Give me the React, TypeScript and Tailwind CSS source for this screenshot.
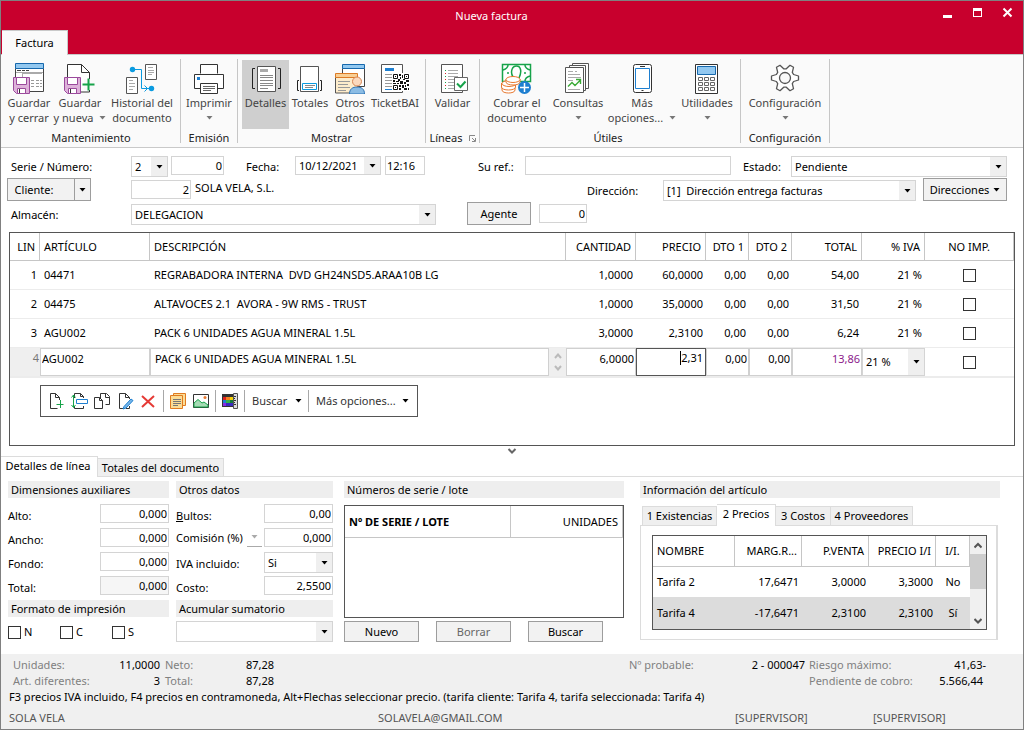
import { useId, type ReactNode } from "react";

function Caret({ className = "text-black" }: { className?: string }) {
  return (
    <svg width="7" height="4" viewBox="0 0 7 4" className={className} aria-hidden="true">
      <path d="M0.5 0h6L3.5 3.6z" fill="currentColor" />
    </svg>
  );
}

function Select({ label, id, options, className = "", height = "h-5" }: { label?: string; id?: string; options: string[]; className?: string; height?: string }) {
  return (
    <div className={`relative ${height} ${className}`}>
      <select id={id} aria-label={label} className="h-full w-full appearance-none border border-[#d4d4d4] bg-white pr-5 pl-[3px] outline-none">
        {options.map((o) => (
          <option key={o}>{o}</option>
        ))}
      </select>
      <span className="pointer-events-none absolute inset-y-px right-px flex w-4 items-center justify-center bg-[#efefef]">
        <Caret />
      </span>
    </div>
  );
}

function Field({ id, label, value, className = "" }: { id?: string; label?: string; value: string; className?: string }) {
  return (
    <input id={id} aria-label={label} defaultValue={value} className={`h-[19px] border border-[#d4d4d4] bg-white px-px outline-none ${className}`} />
  );
}

function PushButton({ children, className = "" }: { children: ReactNode; className?: string }) {
  return (
    <button type="button" className={`flex items-center justify-center border border-[#9d9d9d] bg-[#f2f2f2] ${className}`}>
      {children}
    </button>
  );
}

function Check({ label }: { label: string }) {
  return <input type="checkbox" aria-label={label} className="block size-[13px] appearance-none border border-[#333] bg-white checked:bg-[#333]" />;
}

/* ---------- Ribbon icons ---------- */

function Icon({ children }: { children: ReactNode }) {
  return (
    <svg width="32" height="32" viewBox="0 0 32 32" fill="none" aria-hidden="true" className="shrink-0">
      {children}
    </svg>
  );
}

function Floppy() {
  return (
    <g>
      <path d="M0.5 15.5h16v16H3.5l-3-3z" fill="#deb2da" stroke="#9b4a9c" />
      <path d="M3.5 15.5h10v7h-10z" fill="#fff" stroke="#9b4a9c" />
      <path d="M4.500 31.500v-5h8v5z" fill="#fff" stroke="#9b4a9c" />
      <path d="M6.500 27v4" stroke="#333" />
    </g>
  );
}

const saveClose = (
  <Icon>
    <path d="M2.500 6.500h28v23h-28z" fill="#fff" stroke="#444" />
    <path d="M2.500 1.500h28v5h-28z" fill="#92c8f0" stroke="#1668ad" />
    <path d="M4 8.500h4M9 8.500h3M13 8.500h3" stroke="#444" />
    <path d="M9 11.500h20M9.500 11v4M3 10.500h27" stroke="#aaa" />
    <path d="M18 18.500h3M23 18.500h6M18 21.500h3M23 21.500h6M18 24.500h3M23 24.500h6M9 15v3" stroke="#999" strokeDasharray="3 1" />
    <Floppy />
  </Icon>
);

const saveNew = (
  <Icon>
    <path d="M3.500 30V2.500h14l8 8V30z" fill="#fff" stroke="#333" />
    <path d="M17.500 2.500v8h8" stroke="#333" />
    <path d="M20 17h10v11H20z" fill="#fafafa" />
    <Floppy />
    <path d="M24.500 16.500v12M18.500 22.500h12" stroke="#17a34a" strokeWidth="2" />
  </Icon>
);

const history = (
  <Icon>
    <path d="M19.500 2.500h11v15h-11zM0.500 15.500h11v16h-11z" fill="#fff" stroke="#555" />
    <path d="M22 5.500h5M22 8.500h6M22 10.500h6M22 12.500h4M3 18.500h4M3 21.500h6M3 24.500h6M3 27.500h4" stroke="#aaa" />
    <circle cx="6.500" cy="7.500" r="2.700" fill="#0b9be0" />
    <circle cx="25.500" cy="26.500" r="2.700" fill="#0b9be0" />
    <path d="M7 7.500h8.500v19H24M18.500 23.500l3 3-3 3" stroke="#0b9be0" />
  </Icon>
);

const printer = (
  <Icon>
    <path d="M7.500 11.500v-9h17v9" fill="#fff" stroke="#333" />
    <path d="M1.500 12.500h29v14h-29z" fill="#fff" stroke="#333" />
    <path d="M4 15h3v3H4z" fill="#1e7fd0" />
    <path d="M7.500 21.500h17v10h-17z" fill="#fff" stroke="#333" />
    <path d="M10 24.500h12M10 26.500h12M10 28.500h8" stroke="#666" />
  </Icon>
);

const details = (
  <Icon>
    <path d="M7.500 4.500h18v25h-18z" fill="#fff" stroke="#555" />
    <path d="M10 7h8v3h-8z" fill="#aaa" />
    <path d="M10 13.500h13M10 15.500h13M10 18.500h13M10 21.500h13M10 23.500h13M10 26.500h8" stroke="#888" />
    <path d="M5 6.500H2.500v20H5M28 6.500h2.500v20H28" stroke="#222" />
  </Icon>
);

const totals = (
  <Icon>
    <path d="M6.500 4.500h18v25h-18z" fill="#fff" stroke="#555" />
    <path d="M8.500 21.500h14v6h-14z" fill="#fff" stroke="#0b9be0" />
    <path d="M11 23.500h10M11 25.500h8" stroke="#888" />
    <path d="M5 18.500H3.500v10H5M26 18.500h1.500v10H26" stroke="#222" />
  </Icon>
);

const otherData = (
  <Icon>
    <path d="M8.500 6.500h22v18h-22z" fill="#fff" stroke="#444" />
    <path d="M8.500 2.500h22v4h-22z" fill="#92c8f0" stroke="#1668ad" />
    <path d="M1.500 15.500h22v15.500h-22z" fill="#fdeccb" stroke="#555" />
    <path d="M1.500 11.500h22v4h-22z" fill="#f9cf94" stroke="#dc7b26" />
    <path d="M4 19.500h12M4 22.500h10M4 25.500h12M4 28.500h8" stroke="#999" />
    <path d="M15.500 32c0-5 3-7 7.500-7s7.500 2 7.500 7z" fill="#8bbce4" stroke="#2a72b4" />
    <circle cx="23" cy="19.500" r="4.500" fill="#fbd9bd" stroke="#d88755" />
  </Icon>
);

const ticket = (
  <Icon>
    <path d="M2.500 2.500h21v28h-21z" fill="#fff" stroke="#555" />
    <path d="M6 6h9v3H6z" fill="#1e7fd0" />
    <path d="M6 12.500h9M6 15.500h7M6 18.500h7M6 21.500h7M6 24.500h7" stroke="#999" />
    <path d="M6 27.500h7" stroke="#1e7fd0" />
    <path d="M13 11h18v18H13z" fill="#fff" />
    <path d="M14.500 12.500h4v4h-4zM25.500 12.500h4v4h-4zM14.500 23.500h4v4h-4z" stroke="#111" />
    <path d="M16 14h1v1h-1zM27 14h1v1h-1zM16 25h1v1h-1zM20 12h2v2h-2zM23 13h1v3h-1zM21 15h1v2h-1zM14 18h2v2h-2zM17 19h3v1h-3zM19 17h2v2h-2zM21 19h3v3h-3zM24 17h2v1h-2zM27 18h3v2h-3zM25 20h2v2h-2zM14 21h3v1h-3zM18 21h2v1h-2zM20 23h2v2h-2zM23 23h2v3h-2zM26 23h1v2h-1zM28 22h2v2h-2zM20 26h2v2h-2zM25 26h3v2h-3zM29 26h1v2h-1z" fill="#111" />
  </Icon>
);

const validate = (
  <Icon>
    <path d="M4.500 2.500h21v28h-21z" fill="#fff" stroke="#555" />
    <path d="M11 8.500h10M11 11.500h10M11 14.500h10M11 17.500h10M11 20.500h6M11 23.500h6M11 26.500h6" stroke="#aaa" />
    <path d="M8 8.500h1M8 14.500h1M8 20.500h1M8 26.500h1" stroke="#17a34a" />
    <path d="M8 11.500h1M8 17.500h1M8 23.500h1" stroke="#d22" />
    <path d="M17.500 15.500h13v13h-13z" fill="#fff" stroke="#666" />
    <path d="M20 21.500l3.500 3.500 5-5.500" stroke="#17a34a" strokeWidth="2" />
  </Icon>
);

const cash = (
  <Icon>
    <path d="M1.500 2.500h28v17h-28z" fill="#fff" stroke="#17a34a" strokeWidth="1.500" />
    <path d="M2 8c3-1 5-3 5-5M29 8c-3-1-5-3-5-5M29 14c-3 1-5 3-5 5M12 15c-3-5-1-11 3.500-11S21 10 18 16" stroke="#17a34a" strokeWidth="1.500" />
    <circle cx="7" cy="11" r="1" fill="#17a34a" />
    <circle cx="24" cy="11" r="1" fill="#17a34a" />
    <g fill="#fff" stroke="#e8782f">
      <path d="M1 25v3c0 4 13 4 13 0v-3" />
      <path d="M0.500 21v4c0 4 14 4 14 0v-4" />
      <ellipse cx="8" cy="21.500" rx="7" ry="3" />
      <path d="M5 17v3c0 4 14 4 14 0v-3" />
      <ellipse cx="12" cy="17.500" rx="7" ry="3" />
    </g>
    <circle cx="23.500" cy="25.500" r="6.500" fill="#1e7fd0" />
    <path d="M23.500 21v9M19 25.500h9" stroke="#fff" strokeWidth="1.500" />
  </Icon>
);

const queries = (
  <Icon>
    <path d="M10.500 1.500h16v25h-16z" fill="#fff" stroke="#555" />
    <path d="M7.500 3.500h16v25h-16z" fill="#fff" stroke="#555" />
    <path d="M3.500 5.500h18v25h-18z" fill="#fff" stroke="#555" />
    <path d="M6 9.500h5M13 9.500h2M6 12.500h12M6 15.500h13M6 18.500h5M6 27.500h12" stroke="#aaa" />
    <path d="M6 24.500l4-4 3 3 5-5M14 17.500h4.500V22" stroke="#3aaa35" strokeWidth="1.400" />
  </Icon>
);

const phone = (
  <Icon>
    <rect x="7.500" y="2.500" width="18" height="28" rx="2" fill="#fff" stroke="#333" />
    <path d="M9.500 6.500h14v20h-14z" fill="#fff" stroke="#1e7fd0" />
    <path d="M14 4.500h5M15.500 28.500h2" stroke="#333" />
  </Icon>
);

const calculator = (
  <Icon>
    <path d="M4.500 2.500h22v29h-22z" fill="#fff" stroke="#333" />
    <path d="M6.500 4.500h18v8h-18z" fill="#92c8f0" stroke="#1668ad" />
    <path d="M7.500 15.500h4v3h-4zM13.500 15.500h4v3h-4zM19.500 15.500h4v3h-4zM7.500 20.500h4v3h-4zM13.500 20.500h4v3h-4zM19.500 20.500h4v3h-4zM7.500 25.500h4v3h-4zM13.500 25.500h4v3h-4zM19.500 25.500h4v3h-4z" stroke="#666" />
  </Icon>
);

const gear = (
  <Icon>
    <path
      d="M24.600 12.500L29.500 14v4l-4.900 1.500-1.300 2.200 1.200 5L21 28.700l-3.700-3.500h-2.600L11 28.700l-3.500-2 1.200-5-1.300-2.200L2.500 18v-4l4.900-1.500 1.300-2.200-1.200-5 3.500-2 3.700 3.500h2.600L21 3.300l3.500 2-1.200 5z"
      fill="#fff"
      stroke="#555"
      strokeWidth="1.300"
      strokeLinejoin="round"
    />
    <circle cx="16" cy="16" r="5.500" fill="#fafafa" stroke="#555" strokeWidth="1.300" />
  </Icon>
);

/* ---------- Ribbon ---------- */

function Tool({ icon, lines, width, active, drop }: { icon: ReactNode; lines: string[]; width: string; active?: boolean; drop?: boolean }) {
  return (
    <button type="button" className={`flex h-[69px] flex-col items-center pt-0.5 leading-[15px] whitespace-nowrap text-[#444] ${width} ${active ? "bg-[#cfcfcf]" : ""}`}>
      {icon}
      <span className="pt-px">{lines[0]}</span>
      <span className="flex h-[15px] items-center gap-1.5">
        {lines[1]}
        {drop && <Caret className="text-[#777]" />}
      </span>
    </button>
  );
}

function Group({ label, children, className = "", corner }: { label: string; children: ReactNode; className?: string; corner?: boolean }) {
  return (
    <section className={`my-1 flex flex-col border-r border-[#c6c6c6] pt-px ${className}`}>
      <div className="flex">{children}</div>
      <div className="flex items-center justify-center gap-1.5 pt-1 leading-[10px] text-[#222]">
        {label}
        {corner && (
          <svg width="7" height="7" viewBox="0 0 7 7" fill="none" stroke="#888" aria-hidden="true">
            <path d="M0.500 6V0.500H6M3 3l3 3M6.500 3v3.500H3" />
          </svg>
        )}
      </div>
    </section>
  );
}

function Ribbon() {
  return (
    <div className="flex h-[94px] overflow-hidden border-y border-[#c9c9c9] bg-[#fafafa]">
      <Group label="Mantenimiento" className="pl-[3px] pr-[2px]">
        <Tool icon={saveClose} lines={["Guardar", "y cerrar"]} width="w-[50px]" />
        <Tool icon={saveNew} lines={["Guardar", "y nueva"]} width="w-[52px]" drop />
        <Tool icon={history} lines={["Historial del", "documento"]} width="w-[72px]" />
      </Group>
      <Group label="Emisión">
        <Tool icon={printer} lines={["Imprimir", ""]} width="w-[56px]" drop />
      </Group>
      <Group label="Mostrar" className="pl-[4px] pr-[4px]">
        <Tool icon={details} lines={["Detalles", ""]} width="w-[47px]" active />
        <Tool icon={totals} lines={["Totales", ""]} width="w-[42px]" />
        <Tool icon={otherData} lines={["Otros", "datos"]} width="w-[38px]" />
        <Tool icon={ticket} lines={["TicketBAI", ""]} width="w-[52px]" />
      </Group>
      <Group label="Líneas" corner>
        <Tool icon={validate} lines={["Validar", ""]} width="w-[53px]" />
      </Group>
      <Group label="Útiles" className="pl-[2px] pr-[6px]">
        <Tool icon={cash} lines={["Cobrar el", "documento"]} width="w-[70px]" />
        <Tool icon={queries} lines={["Consultas", ""]} width="w-[52px]" drop />
        <Tool icon={phone} lines={["Más", "opciones..."]} width="w-[76px]" drop />
        <Tool icon={calculator} lines={["Utilidades", ""]} width="w-[54px]" drop />
      </Group>
      <Group label="Configuración">
        <Tool icon={gear} lines={["Configuración", ""]} width="w-[88px]" drop />
      </Group>
    </div>
  );
}

/* ---------- Invoice header ---------- */

function InvoiceHeader() {
  return (
    <form className="flex flex-col pt-2 pr-4 pl-1.5">
      <div className="flex h-6 items-start">
        <label htmlFor="serie" className="w-[124px] pt-[3px] pl-1">Serie / Número:</label>
        <Select id="serie" options={["2"]} className="w-[37px]" height="h-[21px]" />
        <Field label="Número" value="0" className="ml-[3px] w-[53px] text-right" />
        <label htmlFor="fecha" className="w-[71px] pt-[3px] pl-[22px]">Fecha:</label>
        <Select id="fecha" options={["10/12/2021"]} className="w-[86px]" height="h-[19px]" />
        <Field label="Hora" value="12:16" className="ml-1 w-10" />
        <label htmlFor="ref" className="w-[100px] pt-[3px] pl-[53px]">Su ref.:</label>
        <Field id="ref" value="" className="min-w-0 flex-1" />
        <label htmlFor="estado" className="w-[60px] pt-[3px] pl-3">Estado:</label>
        <Select id="estado" options={["Pendiente"]} className="w-[216px]" height="h-[21px]" />
      </div>
      <div className="flex h-6 items-start">
        <div className="-mt-0.5 flex">
          <PushButton className="h-[23px] w-[68px] pr-3.5">Cliente:</PushButton>
          <button type="button" aria-label="Opciones de cliente" className="flex h-[23px] w-4 items-center justify-center border border-l-0 border-[#9d9d9d] bg-[#f2f2f2]">
            <Caret />
          </button>
        </div>
        <Field label="Cliente" value="2" className="ml-10 w-[60px] text-right" />
        <span className="flex-1 pl-1">SOLA VELA, S.L.</span>
        <label htmlFor="direccion" className="w-[76px] pt-[3px]">Dirección:</label>
        <Select id="direccion" options={["[1]\u00a0 Dirección entrega facturas"]} className="w-[253px]" height="h-[21px]" />
        <PushButton className="-mt-0.5 ml-[7px] h-[23px] w-[84px] gap-1">
          Direcciones <Caret />
        </PushButton>
      </div>
      <div className="flex h-7 items-start">
        <label htmlFor="almacen" className="w-[124px] pt-[3px] pl-1">Almacén:</label>
        <Select id="almacen" options={["DELEGACION"]} className="w-[305px]" height="h-[21px]" />
        <PushButton className="-mt-0.5 ml-[31px] h-[23px] w-16">Agente</PushButton>
        <Field label="Agente" value="0" className="ml-2 w-12 text-right" />
      </div>
    </form>
  );
}

/* ---------- Line grid ---------- */

type Line = { n: string; art: string; desc: string; cant: string; precio: string; total: string };

const lines: Line[] = [
  { n: "1", art: "04471", desc: "REGRABADORA INTERNA  DVD GH24NSD5.ARAA10B LG", cant: "1,0000", precio: "60,0000", total: "54,00" },
  { n: "2", art: "04475", desc: "ALTAVOCES 2.1  AVORA - 9W RMS - TRUST", cant: "1,0000", precio: "35,0000", total: "31,50" },
  { n: "3", art: "AGU002", desc: "PACK 6 UNIDADES AGUA MINERAL 1.5L", cant: "3,0000", precio: "2,3100", total: "6,24" },
];

function EditCell({ label, value, className = "" }: { label: string; value: string; className?: string }) {
  return <input aria-label={label} defaultValue={value} className={`block h-7 w-full min-w-0 border border-[#d0d0d0] bg-white px-px pb-2 outline-none ${className}`} />;
}

function SmallIcon({ label, children }: { label: string; children: ReactNode }) {
  return (
    <button type="button" aria-label={label} className="flex w-[23px] shrink-0 justify-center">
      <svg width="18" height="18" viewBox="0 0 18 18" fill="none" aria-hidden="true">
        {children}
      </svg>
    </button>
  );
}

const Divider = () => <span className="h-[22px] w-px bg-[#a8a8a8]" />;

function LineToolbar() {
  return (
    <div className="mt-[7px] ml-[30px] flex h-8 w-fit items-center border border-[#555] bg-white pr-2 pl-[3px] text-[#333]">
      <SmallIcon label="Nueva línea">
        <path d="M12.500 8V5.500l-4-4h-5v15h7M8.500 1.500v4h4" stroke="#333" />
        <path d="M13.500 8v8M9.500 12.500h7" stroke="#17a34a" />
      </SmallIcon>
      <SmallIcon label="Insertar línea">
        <path d="M4.500 6V1.500h6l3 3V6M4.500 14v2.500h9V14M10.500 1.500v3h3" stroke="#333" />
        <path d="M6.500 7.500h11v4h-11z" stroke="#1e7fd0" />
        <path d="M3.500 3v12M1.500 5.500l2-2.500 2 2.500M1.500 13l2 2.500 2-2.500" stroke="#17a34a" />
      </SmallIcon>
      <SmallIcon label="Duplicar línea">
        <path d="M7.500 6V1.500h6l3 3v8h-4M12.500 1.500v4h4" stroke="#333" />
        <path d="M1.500 5.500h5l3 3v8h-8zM6.500 5.500v3h3" fill="#fff" stroke="#333" />
      </SmallIcon>
      <SmallIcon label="Editar línea">
        <path d="M13.500 7V5.500l-4-4h-6v15h4M9.500 1.500v4h4M10 16.500h3.500V14" stroke="#333" />
        <path d="M8 14.500L15 7l2 1.500-7 7.500-3 1z" fill="#78b7ea" stroke="#1e7fd0" />
      </SmallIcon>
      <SmallIcon label="Eliminar línea">
        <path d="M3 4l12 11M15 4L3 15" stroke="#e53a35" strokeWidth="2" />
      </SmallIcon>
      <span className="w-1" />
      <Divider />
      <span className="w-0.5" />
      <SmallIcon label="Notas">
        <path d="M4.500 1.500h12v12h-12z" fill="#fbdc96" stroke="#e07b20" />
        <path d="M1.500 3.500h12v13h-12z" fill="#fbdc96" stroke="#e07b20" />
        <path d="M4 7.500h8M4 9.500h8M4 11.500h8M4 13.500h5" stroke="#777" />
      </SmallIcon>
      <SmallIcon label="Imagen">
        <path d="M1.500 2.500h15v13h-15z" fill="#fff" stroke="#333" />
        <path d="M2 11l4-3.500 4 3.500 2-1 4 3v2H2z" fill="#a5dbb4" stroke="#17a34a" />
        <circle cx="13" cy="5.500" r="1.500" fill="#e8782f" />
      </SmallIcon>
      <span className="w-[3px]" />
      <Divider />
      <span className="w-0.5" />
      <SmallIcon label="Tallas y colores">
        <path d="M1 2h12v13H1z" fill="#333" />
        <path d="M2 5h3v3H2z" fill="#e02020" />
        <path d="M5 5h4v3H5z" fill="#f58220" />
        <path d="M9 5h3v3H9z" fill="#f4d20b" />
        <path d="M2 8h3v3H2z" fill="#1e7fd0" />
        <path d="M5 8h4v3H5z" fill="#35b34a" />
        <path d="M9 8h3v3H9z" fill="#147a3a" />
        <path d="M2 11h3v3H2z" fill="#8a2be2" />
        <path d="M5 11h7v3H5z" fill="#3b2bc0" />
        <path d="M12.500 1.500h4v15h-4z" fill="#ddd" stroke="#555" />
        <path d="M13 4.500h2M13 6.500h1M13 8.500h2M13 10.500h1M13 12.500h2" stroke="#333" />
      </SmallIcon>
      <span className="w-[3px]" />
      <Divider />
      <button type="button" className="flex w-[63px] items-center gap-2 pl-[7px] whitespace-nowrap">
        Buscar <Caret />
      </button>
      <Divider />
      <button type="button" className="flex items-center gap-1.5 pl-[7px] whitespace-nowrap">
        Más opciones... <Caret />
      </button>
    </div>
  );
}

const headCell = "border-r border-b border-[#c6c6c6] px-1 font-normal";

function LineGrid() {
  return (
    <div className="mx-2 flex min-h-[214px] flex-1 flex-col border border-[#555]">
      <table className="w-full table-fixed border-separate border-spacing-0">
        <colgroup>
          <col className="w-[30px]" />
          <col className="w-[110px]" />
          <col />
          <col className="w-[70px]" />
          <col className="w-[70px]" />
          <col className="w-[43px]" />
          <col className="w-[43px]" />
          <col className="w-[70px]" />
          <col className="w-[63px]" />
          <col className="w-[89px]" />
        </colgroup>
        <thead>
          <tr className="h-7 whitespace-nowrap">
            <th className={`${headCell} text-right`}>LIN</th>
            <th className={`${headCell} text-left`}>ARTÍCULO</th>
            <th className={`${headCell} text-left`}>DESCRIPCIÓN</th>
            <th className={`${headCell} text-right`}>CANTIDAD</th>
            <th className={`${headCell} text-right`}>PRECIO</th>
            <th className={`${headCell} text-right`}>DTO 1</th>
            <th className={`${headCell} text-right`}>DTO 2</th>
            <th className={`${headCell} text-right`}>TOTAL</th>
            <th className={`${headCell} text-right`}>% IVA</th>
            <th className={`${headCell} text-center`}>NO IMP.</th>
          </tr>
        </thead>
        <tbody>
          {lines.map((l) => (
            <tr key={l.n} className="h-[29px] whitespace-pre *:border-b *:border-[#ececec] *:px-[3px]">
              <td className="text-right">{l.n}</td>
              <td className="pl-1!">{l.art}</td>
              <td className="pl-1!">{l.desc}</td>
              <td className="text-right">{l.cant}</td>
              <td className="text-right">{l.precio}</td>
              <td className="text-right">0,00</td>
              <td className="text-right">0,00</td>
              <td className="text-right">{l.total}</td>
              <td className="text-right">21 %</td>
              <td>
                <div className="flex justify-center">
                  <Check label={`No imprimir línea ${l.n}`} />
                </div>
              </td>
            </tr>
          ))}
          <tr className="*:border-b-2 *:border-[#ececec] *:p-0">
            <td className="h-[30px] bg-[#efefef] pr-px! pb-2! text-right text-[#777]">4</td>
            <td><EditCell label="Artículo" value="AGU002" /></td>
            <td>
              <div className="flex">
                <EditCell label="Descripción" value="PACK 6 UNIDADES AGUA MINERAL 1.5L" className="flex-1 pl-1!" />
                <div className="flex w-[17px] flex-col items-center justify-center gap-1.5 bg-[#efefef]">
                  <button type="button" aria-label="Subir">
                    <svg width="8" height="6" viewBox="0 0 8 6" fill="none" stroke="#bbb" strokeWidth="2"><path d="M1 5l3-3.500L7 5" /></svg>
                  </button>
                  <button type="button" aria-label="Bajar">
                    <svg width="8" height="6" viewBox="0 0 8 6" fill="none" stroke="#bbb" strokeWidth="2"><path d="M1 1l3 3.500L7 1" /></svg>
                  </button>
                </div>
              </div>
            </td>
            <td><EditCell label="Cantidad" value="6,0000" className="text-right" /></td>
            <td>
              <div className="flex h-7 justify-end border border-[#555] pr-0.5">
                <span className="mt-0.5 h-3.5 w-px bg-black" />
                <input aria-label="Precio" defaultValue="2,31" className="block w-[22px] pb-2 text-right outline-none" />
              </div>
            </td>
            <td><EditCell label="Descuento 1" value="0,00" className="text-right" /></td>
            <td><EditCell label="Descuento 2" value="0,00" className="text-right" /></td>
            <td><EditCell label="Total" value="13,86" className="text-right text-[#8b1a8b]" /></td>
            <td><Select label="IVA" options={["21 %"]} className="w-full" height="h-7" /></td>
            <td>
              <div className="flex justify-center">
                <Check label="No imprimir línea 4" />
              </div>
            </td>
          </tr>
        </tbody>
      </table>
      <LineToolbar />
    </div>
  );
}

/* ---------- Lower detail panels ---------- */

function PanelTitle({ children, className = "" }: { children: ReactNode; className?: string }) {
  return <h2 className={`h-[17px] bg-[#eeeeee] px-[3px] leading-[17px] whitespace-nowrap ${className}`}>{children}</h2>;
}

function Row({ label, value, width, readOnly }: { label: ReactNode; value: string; width: string; readOnly?: boolean }) {
  const id = useId();
  return (
    <div className="flex h-6 items-start justify-between">
      <label htmlFor={id} className="pt-1">{label}</label>
      <Field id={id} value={value} className={`text-right ${width} ${readOnly ? "bg-[#f6f6f6]!" : ""}`} />
    </div>
  );
}

function Dimensions() {
  return (
    <div className="w-[161px] shrink-0">
      <PanelTitle>Dimensiones auxiliares</PanelTitle>
      <div className="pt-1.5">
        <Row label="Alto:" value="0,000" width="w-[69px]" />
        <Row label="Ancho:" value="0,000" width="w-[69px]" />
        <Row label="Fondo:" value="0,000" width="w-[69px]" />
        <Row label="Total:" value="0,000" width="w-[69px]" readOnly />
      </div>
      <PanelTitle>Formato de impresión</PanelTitle>
      <div className="flex pt-[7px]">
        {["N", "C", "S"].map((f) => (
          <label key={f} className="flex w-[52px] items-center gap-[3px]">
            <Check label={f} />
            {f}
          </label>
        ))}
      </div>
    </div>
  );
}

function OtherData() {
  return (
    <div className="ml-[7px] w-[157px] shrink-0">
      <PanelTitle>Otros datos</PanelTitle>
      <div className="pt-1.5">
        <Row label={<><u>B</u>ultos:</>} value="0,00" width="w-[69px]" />
        <div className="flex h-6 items-start">
          <label htmlFor="comision" className="w-[71px] pt-0.5">Comisión (%)</label>
          <button type="button" aria-label="Tipo de comisión" className="flex h-[19px] w-[15px] items-center justify-center border-b border-[#aaa]">
            <Caret className="text-[#aaa]" />
          </button>
          <Field id="comision" value="0,000" className="ml-auto w-[69px] text-right" />
        </div>
        <div className="flex h-6 items-start justify-between">
          <label htmlFor="iva" className="pt-1">IVA incluido:</label>
          <Select id="iva" options={["Si"]} className="w-[69px]" height="h-[21px]" />
        </div>
        <Row label="Costo:" value="2,5500" width="w-[69px]" />
      </div>
      <PanelTitle>Acumular sumatorio</PanelTitle>
      <Select label="Acumular sumatorio" options={[""]} className="mt-1 w-[157px]" height="h-[21px]" />
    </div>
  );
}

function SerialNumbers() {
  return (
    <div className="ml-[11px] flex w-[280px] shrink-0 flex-col">
      <PanelTitle>Números de serie / lote</PanelTitle>
      <div className="mt-[7px] h-[113px] border border-[#555]">
        <table className="w-full table-fixed border-separate border-spacing-0">
          <thead>
            <tr className="h-8">
              <th className="w-[166px] border-r border-b border-[#c6c6c6] pl-1 text-left font-bold">Nº DE SERIE / LOTE</th>
              <th className="border-r border-b border-[#c6c6c6] pr-1 text-right font-normal">UNIDADES</th>
            </tr>
          </thead>
        </table>
      </div>
      <div className="mt-[3px] flex gap-[17px]">
        <PushButton className="h-[21px] w-[75px]">Nuevo</PushButton>
        <PushButton className="h-[21px] w-[75px] text-[#666]">Borrar</PushButton>
        <PushButton className="h-[21px] w-[75px]">Buscar</PushButton>
      </div>
    </div>
  );
}

const prices = [
  ["Tarifa 2", "17,6471", "3,0000", "3,3000", "No"],
  ["Tarifa 4", "-17,6471", "2,3100", "2,3100", "Sí"],
];

const sideTab = "border-t border-r border-[#dcdcdc] bg-[#efefef] h-[19px] whitespace-nowrap";
const priceHead = "border-r border-b border-[#c6c6c6] px-1 font-normal";

function ArticleInfo() {
  return (
    <div className="ml-4 max-w-[360px] min-w-0 flex-1">
      <PanelTitle>Información del artículo</PanelTitle>
      <div role="tablist" className="mt-[7px] flex h-5 items-end pl-0.5">
        <button type="button" role="tab" className={`${sideTab} w-[75px] border-l`}>1 Existencias</button>
        <button type="button" role="tab" aria-selected="true" className="z-10 -mb-px h-[22px] w-[59px] border-t border-r border-[#dcdcdc] bg-white pb-1 whitespace-nowrap">2 Precios</button>
        <button type="button" role="tab" className={`${sideTab} w-[55px]`}>3 Costos</button>
        <button type="button" role="tab" className={`${sideTab} w-[82px]`}>4 Proveedores</button>
      </div>
      <div className="mr-0.5 border border-r-2 border-[#dcdcdc] px-[11px] py-[9px]">
        <div className="mr-[-2px] flex border border-[#555]">
          <table className="min-w-0 flex-1 table-fixed border-separate border-spacing-0">
            <thead>
              <tr className="h-[31px] whitespace-nowrap">
                <th className={`${priceHead} w-[82px] text-left`}>NOMBRE</th>
                <th className={`${priceHead} w-[67px] text-right`}>MARG.R...</th>
                <th className={`${priceHead} w-[67px] text-right`}>P.VENTA</th>
                <th className={`${priceHead} w-[67px] text-right`}>PRECIO I/I</th>
                <th className={`${priceHead} text-center`}>I/I.</th>
              </tr>
            </thead>
            <tbody>
              {prices.map((p, i) => (
                <tr key={p[0]} className={i === 1 ? "h-8 bg-[#dcdcdc]" : "h-[30px]"}>
                  <td className="pl-1">{p[0]}</td>
                  <td className="pr-[3px] text-right">{p[1]}</td>
                  <td className="pr-[3px] text-right">{p[2]}</td>
                  <td className="pr-[3px] text-right">{p[3]}</td>
                  <td className="text-center">{p[4]}</td>
                </tr>
              ))}
            </tbody>
          </table>
          <div className="flex w-4 flex-col items-center bg-[#f0f0f0]">
            <svg width="8" height="18" viewBox="0 0 8 18" fill="none" stroke="#555" strokeWidth="2" aria-hidden="true"><path d="M0.500 11.500L4 8l3.500 3.500" /></svg>
            <span className="h-[35px] w-full bg-[#cdcdcd]" />
            <svg width="8" height="18" viewBox="0 0 8 18" fill="none" stroke="#555" strokeWidth="2" className="mt-auto" aria-hidden="true"><path d="M0.500 8L4 11.500 7.500 8" /></svg>
          </div>
        </div>
      </div>
    </div>
  );
}

function DetailTabs() {
  return (
    <section>
      <div role="tablist" className="flex h-[21px] items-end border-b border-[#dcdcdc]">
        <button type="button" role="tab" aria-selected="true" className="-mb-px h-[21px] w-[97px] border-t border-r border-[#dcdcdc] bg-white pr-0.5 pb-0.5 whitespace-nowrap">Detalles de línea</button>
        <button type="button" role="tab" className="h-[18px] w-[126px] border-t border-r border-[#dcdcdc] bg-[#efefef] whitespace-nowrap">Totales del documento</button>
      </div>
      <div className="flex pt-1 pr-2 pb-3 pl-[7px]">
        <Dimensions />
        <OtherData />
        <SerialNumbers />
        <ArticleInfo />
      </div>
    </section>
  );
}

/* ---------- Footer ---------- */

function Footer() {
  return (
    <footer className="bg-[#f0f0f0] pb-[3px] text-[#808080]">
      <div className="flex justify-between pt-[3px] pr-[37px] pl-3 leading-4">
        <dl className="grid grid-cols-[88px_59px_66px_48px]">
          <dt>Unidades:</dt>
          <dd className="text-right text-black">11,0000</dd>
          <dt className="pl-[5px]">Neto:</dt>
          <dd className="text-right text-black">87,28</dd>
          <dt className="whitespace-nowrap">Art. diferentes:</dt>
          <dd className="text-right text-black">3</dd>
          <dt className="pl-[5px]">Total:</dt>
          <dd className="text-right text-black">87,28</dd>
        </dl>
        <dl className="grid grid-cols-[96px_80px_121px_60px]">
          <dt>Nº probable:</dt>
          <dd className="text-right text-black">2 - 000047</dd>
          <dt className="pl-1">Riesgo máximo:</dt>
          <dd className="text-right text-black">41,63-</dd>
          <dt className="col-start-3 pl-1">Pendiente de cobro:</dt>
          <dd className="pr-[3px] text-right text-black">5.566,44</dd>
        </dl>
      </div>
      <p className="pl-2 leading-4 text-black">
        F3 precios IVA incluido, F4 precios en contramoneda, Alt+Flechas seleccionar precio. (tarifa cliente: Tarifa 4, tarifa seleccionada: Tarifa 4)
      </p>
      <div className="flex pt-[5px] pl-2 leading-4 text-[#555]">
        <span className="w-[369px]">SOLA VELA</span>
        <span className="flex-1">SOLAVELA@GMAIL.COM</span>
        <span className="w-[138px]">[SUPERVISOR]</span>
        <span className="w-[150px]">[SUPERVISOR]</span>
      </div>
    </footer>
  );
}

export default function App() {
  return (
    <main className="flex min-h-screen flex-col border border-[#808080] bg-white font-['Noto_Sans','Open_Sans',sans-serif] text-[11px] leading-4 text-black">
      <header className="bg-[#c8002d] text-white">
        <div className="flex h-[29px] items-center">
          <h1 className="flex-1 pl-10 text-center">Nueva factura</h1>
          <div className="-mt-1.5 flex w-[81px] items-start">
            <button type="button" aria-label="Minimizar" className="w-[30px]">
              <svg width="12" height="12" viewBox="0 0 12 12"><path d="M1 8h9v3H1z" fill="#fff" /></svg>
            </button>
            <button type="button" aria-label="Maximizar" className="w-[30px]">
              <svg width="12" height="12" viewBox="0 0 12 12"><path d="M1 1h9v9H1zM2 4h7v5H2z" fill="#fff" fillRule="evenodd" /></svg>
            </button>
            <button type="button" aria-label="Cerrar" className="w-[21px]">
              <svg width="12" height="12" viewBox="0 0 12 12"><path d="M1.500 1.500l8 8M9.500 1.500l-8 8" stroke="#fff" strokeWidth="2" /></svg>
            </button>
          </div>
        </div>
        <nav className="flex pl-px">
          <button type="button" className="z-10 -mb-px h-[25px] w-[66px] border-t border-r border-[#c9c9c9] bg-[#fafafa] text-black">Factura</button>
        </nav>
      </header>
      <Ribbon />
      <InvoiceHeader />
      <LineGrid />
      <div className="flex h-2.5 items-center justify-center">
        <button type="button" aria-label="Ocultar detalles">
          <svg width="10" height="6" viewBox="0 0 10 6" fill="none" stroke="#666" strokeWidth="2"><path d="M1.500 1L5 4.500 8.500 1" /></svg>
        </button>
      </div>
      <DetailTabs />
      <Footer />
    </main>
  );
}
